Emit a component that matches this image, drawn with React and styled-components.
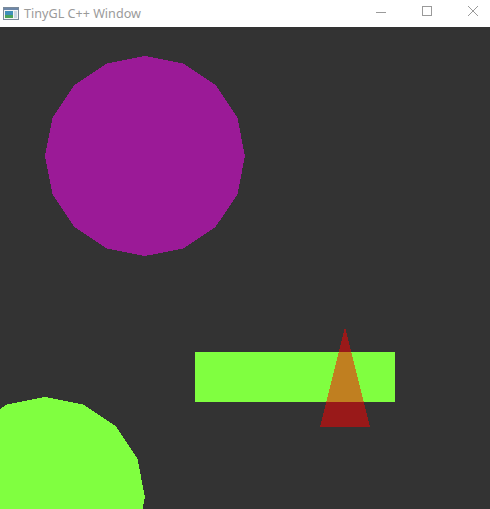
import React from "react";
import styled, { createGlobalStyle } from "styled-components";

const Global = createGlobalStyle`
  html, body {
    margin: 0;
    padding: 0;
    background: #333333;
    overflow: hidden;
  }
`;

const Window = styled.div`
  width: 490px;
  height: 509px;
  display: flex;
  flex-direction: column;
  overflow: hidden;
  background: #333333;
`;

const TitleBar = styled.div`
  height: 27px;
  flex: none;
  background: #ffffff;
  display: flex;
  align-items: center;
`;

const AppIcon = styled.div`
  width: 16px;
  height: 16px;
  margin-left: 3px;
  margin-right: 5px;
  display: flex;
`;

const Title = styled.div`
  flex: 1;
  font-family: "Noto Sans", "Open Sans", sans-serif;
  font-size: 12.6px;
  color: #9a9a9a;
  line-height: 27px;
  white-space: nowrap;
  margin-top: -1px;
`;

const Controls = styled.div`
  display: flex;
  align-self: flex-start;
  height: 21px;
  margin-right: -6px;
`;

const ControlButton = styled.div`
  width: 46px;
  height: 21px;
  display: flex;
  align-items: center;
  justify-content: center;
`;

const Canvas = styled.svg`
  display: block;
  flex: 1;
  width: 490px;
`;

function polygon(cx, cy, r, n) {
  const pts = [];
  for (let i = 0; i < n; i++) {
    const a = -Math.PI / 2 + (i * 2 * Math.PI) / n;
    pts.push(`${(cx + r * Math.cos(a)).toFixed(2)},${(cy + r * Math.sin(a)).toFixed(2)}`);
  }
  return pts.join(" ");
}

export default function App() {
  return (
    <Window>
      <Global />
      <TitleBar>
        <AppIcon>
          <svg width="16" height="16" viewBox="0 0 16 16">
            <rect x="0.5" y="1.5" width="15" height="12" fill="#f4f4f4" stroke="#7a8a9a" />
            <rect x="1" y="2" width="14" height="2" fill="#6d87a8" />
            <rect x="2" y="5" width="8" height="7" fill="#3f8fb8" />
            <rect x="2" y="9" width="8" height="3" fill="#4aa35a" />
            <rect x="11" y="5" width="3" height="7" fill="#c9d6e2" />
          </svg>
        </AppIcon>
        <Title>TinyGL C++ Window</Title>
        <Controls>
          <ControlButton>
            <svg width="10" height="10" viewBox="0 0 10 10">
              <line x1="0" y1="6.5" x2="10" y2="6.5" stroke="#9a9a9a" strokeWidth="1" />
            </svg>
          </ControlButton>
          <ControlButton>
            <svg width="10" height="10" viewBox="0 0 10 10">
              <rect x="0.5" y="0.5" width="9" height="9" fill="none" stroke="#9a9a9a" strokeWidth="1" />
            </svg>
          </ControlButton>
          <ControlButton>
            <svg width="10" height="10" viewBox="0 0 10 10">
              <path d="M0 0 L10 10 M10 0 L0 10" stroke="#9a9a9a" strokeWidth="1" />
            </svg>
          </ControlButton>
        </Controls>
      </TitleBar>
      <Canvas viewBox="0 0 490 482" shapeRendering="crispEdges">
        <polygon points={polygon(145, 129, 100, 16)} fill="#9b1a97" />
        <rect x="195" y="325" width="200" height="50" fill="#80ff40" />
        <polygon points="345,300 320,400 370,400" fill="rgba(255,0,0,0.5)" />
        <polygon points={polygon(45, 470, 100, 16)} fill="#80ff40" />
      </Canvas>
    </Window>
  );
}
